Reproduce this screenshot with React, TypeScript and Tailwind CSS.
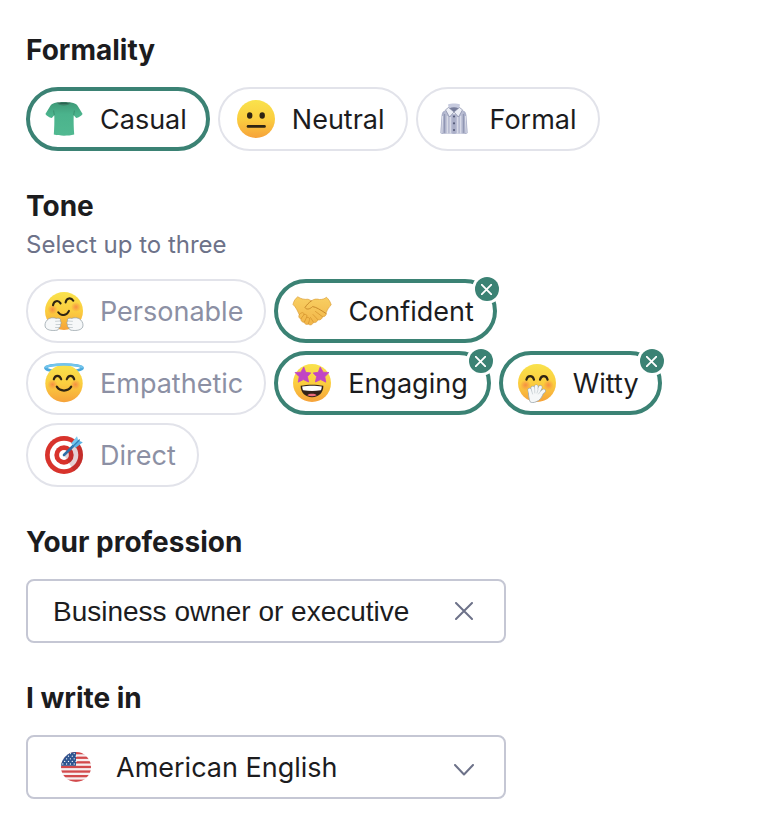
import React, { useState } from 'react';

type Option = {
  id: string;
  label: string;
  icon: React.ReactNode;
};

type ChipProps = {
  option: Option;
  type: 'radio' | 'checkbox';
  name: string;
  checked: boolean;
  muted?: boolean;
  onToggle: () => void;
};

const FaceGradient = ({ id }: { id: string }) => (
  <defs>
    <linearGradient id={id} x1="0" y1="0" x2="0" y2="1">
      <stop offset="0" stopColor="#f9e24c" />
      <stop offset="0.5" stopColor="#fbce3f" />
      <stop offset="1" stopColor="#f6a23a" />
    </linearGradient>
    <radialGradient id={`${id}-cheek`}>
      <stop offset="0" stopColor="#f58544" stopOpacity="0.85" />
      <stop offset="1" stopColor="#f58544" stopOpacity="0" />
    </radialGradient>
  </defs>
);

const TShirtIcon = () => (
  <svg viewBox="0 0 40 40" className="size-10 shrink-0" aria-hidden="true">
    <defs>
      <linearGradient id="tshirt" x1="0" y1="0" x2="0" y2="1">
        <stop offset="0" stopColor="#3f9a78" />
        <stop offset="0.35" stopColor="#4bb38c" />
        <stop offset="1" stopColor="#51b991" />
      </linearGradient>
    </defs>
    <path
      d="M12.5 3.6 C15 5.6 24.5 5.6 27 3.6 C30.5 4.4 32.4 5 33.6 6.8 L38.6 15 C37 17 35 18.4 32.2 19 L29.7 16.2 C29.5 23 29.7 29 30.2 35.6 C24 37.2 16 37.2 9.8 35.6 C10.3 29 10.5 23 10.3 16.2 L7.8 19 C5 18.4 3 17 1.4 15 L6.4 6.8 C7.6 5 9.5 4.4 12.5 3.6 Z"
      fill="url(#tshirt)"
    />
    <path d="M12.5 3.6 C15.5 2.8 24 2.8 27 3.6 C25 7.6 14.5 7.6 12.5 3.6 Z" fill="#3b7d65" />
    <path d="M14.5 4.2 C17 3.6 22.5 3.6 25 4.2 C22 5.4 17.5 5.4 14.5 4.2 Z" fill="#2a6350" />
    <path d="M10.3 16.2 L9.6 11.5 M29.7 16.2 L30.4 11.5" stroke="#36896a" strokeWidth="0.8" fill="none" />
  </svg>
);

const NeutralIcon = () => (
  <svg viewBox="0 0 40 40" className="size-10 shrink-0" aria-hidden="true">
    <FaceGradient id="neutral" />
    <circle cx="20" cy="20" r="19" fill="url(#neutral)" />
    <ellipse cx="13.7" cy="16.5" rx="2.7" ry="3.3" fill="#2e2413" />
    <ellipse cx="26.2" cy="16.5" rx="2.7" ry="3.3" fill="#2e2413" />
    <path d="M12 27.4 H28.5" stroke="#2e2413" strokeWidth="2.6" strokeLinecap="round" />
  </svg>
);

const DressShirtIcon = () => (
  <svg viewBox="0 0 40 40" className="size-10 shrink-0" aria-hidden="true">
    <path d="M11 11.5 C8.5 12.5 7.8 14 7.5 17 L6.3 34 C7.5 35.2 9.3 35.3 10.5 34.6 L12 16 Z" fill="#abb0c9" />
    <path d="M29 11.5 C31.5 12.5 32.2 14 32.5 17 L33.7 34 C32.5 35.2 30.7 35.3 29.5 34.6 L28 16 Z" fill="#abb0c9" />
    <path d="M12.5 10 L20 15 L27.5 10 L29.7 13 L29.2 34.8 H10.8 L10.3 13 Z" fill="#b9bdd3" />
    <path
      d="M13.3 17 V34.5 M16.3 18 V34.5 M23.7 18 V34.5 M26.7 17 V34.5 M8.6 17 L7.9 34 M31.4 17 L32.1 34"
      stroke="#dfe1ec"
      strokeWidth="1"
    />
    <path d="M10.7 15 V34.5 M29.3 15 V34.5" stroke="#858ba9" strokeWidth="0.9" />
    <path d="M18.3 16 H21.7 V34.8 H18.3 Z" fill="#a9aec7" />
    <path d="M14 5.5 C17 4.3 23 4.3 26 5.5 L25 10 L20 13.5 L15 10 Z" fill="#c6cade" />
    <path d="M15.5 9.2 C18 7.8 22 7.8 24.5 9.2 L20 13.5 Z" fill="#777d9b" />
    <path d="M14.5 8.5 L20 13 L15.5 18 L11.5 10.8 Z" fill="#eceef6" stroke="#777d9b" strokeWidth="0.6" />
    <path d="M25.5 8.5 L20 13 L24.5 18 L28.5 10.8 Z" fill="#eceef6" stroke="#777d9b" strokeWidth="0.6" />
    <circle cx="20" cy="17.5" r="1.1" fill="#555b79" />
    <circle cx="20" cy="24.3" r="1.1" fill="#555b79" />
    <circle cx="20" cy="31" r="1.1" fill="#555b79" />
  </svg>
);

const HugIcon = () => (
  <svg viewBox="0 0 40 40" className="size-10 shrink-0" aria-hidden="true">
    <FaceGradient id="hug" />
    <circle cx="20" cy="20" r="19" fill="url(#hug)" />
    <circle cx="8.5" cy="18.5" r="5" fill="url(#hug-cheek)" />
    <circle cx="32" cy="16" r="5" fill="url(#hug-cheek)" />
    <path d="M9 14.2 C9.8 9.6 14.2 8.6 16.6 12.4" stroke="#2e2413" strokeWidth="2.1" strokeLinecap="round" fill="none" />
    <path d="M21.6 11.4 C22.4 6.9 26.9 6 29.3 9.7" stroke="#2e2413" strokeWidth="2.1" strokeLinecap="round" fill="none" />
    <path d="M14.2 21.3 C17 25.5 23 24.5 25 19.8" stroke="#2e2413" strokeWidth="2" strokeLinecap="round" fill="none" />
    <path
      d="M3.2 29 C5 26.5 9.5 26.3 12.5 27.4 C15.5 26.8 17.3 28 16.2 30 C17.6 31 17.4 32.8 16.2 33.5 C17.2 35 16.3 36.4 15 36.5 C15.3 38.5 13.5 39.4 11.5 39.4 C7 39.8 2.6 39 1.3 36 C0.5 33.5 1.3 31 3.2 29 Z"
      fill="#f6f8f9"
      stroke="#8e9ba2"
      strokeWidth="0.7"
    />
    <path
      d="M36.8 29 C35 26.5 30.5 26.3 27.5 27.4 C24.5 26.8 22.7 28 23.8 30 C22.4 31 22.6 32.8 23.8 33.5 C22.8 35 23.7 36.4 25 36.5 C24.7 38.5 26.5 39.4 28.5 39.4 C33 39.8 37.4 39 38.7 36 C39.5 33.5 38.7 31 36.8 29 Z"
      fill="#f6f8f9"
      stroke="#8e9ba2"
      strokeWidth="0.7"
    />
    <path
      d="M16.2 30 L11.5 30.3 M16.2 33.5 L12 33.6 M15 36.5 L11.5 36.5 M23.8 30 L28.5 30.3 M23.8 33.5 L28 33.6 M25 36.5 L28.5 36.5"
      stroke="#b4bec3"
      strokeWidth="0.7"
      strokeLinecap="round"
    />
  </svg>
);

const HandshakeIcon = () => (
  <svg viewBox="0 0 40 40" className="size-10 shrink-0" aria-hidden="true">
    <defs>
      <linearGradient id="shake" x1="0" y1="0" x2="0" y2="1">
        <stop offset="0" stopColor="#f8cf62" />
        <stop offset="1" stopColor="#f2b548" />
      </linearGradient>
    </defs>
    <path
      d="M1 13.5 C1.5 10.5 3.5 7.3 5.8 5.8 C9 8 12.5 8.7 16 8.2 L19.5 9.8 C22 7.8 25 7.8 27.5 8.5 C30.3 8.6 32.5 7.8 34.5 6.3 C36.8 8.3 38.5 11 39.2 14 C36.8 16 35.5 18.5 34.3 21.5 C34.6 24.5 32.5 26 30.5 25.7 C30 28.3 28 29.3 26 28.8 C25 31.3 23 32 21.5 31.3 C20.5 34 18 34.6 16.3 33 C14.5 34 12.5 33 12.3 31.2 C10 31.5 8.5 29.6 9 27.8 C6.8 27.5 6.3 25.3 7.3 23.7 C5.5 20 4 16 1 13.5 Z"
      fill="url(#shake)"
      stroke="#dda03c"
      strokeWidth="0.7"
      strokeLinejoin="round"
    />
    <path
      d="M19.5 9.8 C17 11.5 14.5 14 13 16.6 C14.5 19 18 18.2 20.5 15.6 C24 16 28 18.5 34 22.5"
      fill="none"
      stroke="#c98a2c"
      strokeWidth="1"
      strokeLinecap="round"
      strokeLinejoin="round"
    />
    <path
      d="M23.5 20.5 L30.5 25.7 M21 23.500 L26 28.800 M18.500 26.500 L21.500 31.300 M7.300 23.700 C9 21.300 11.200 21 12 22.700 C12.500 24.300 10 25.300 9 27.800 M12 23.600 C14.300 22.800 15.600 24.300 14.700 26 L12.300 31.200 M15 26.300 C17.300 26 18.300 27.800 17.400 29.400 L16.300 33"
      fill="none"
      stroke="#d5962f"
      strokeWidth="0.8"
      strokeLinecap="round"
    />
  </svg>
);

const HaloIcon = () => (
  <svg viewBox="0 0 40 40" className="size-10 shrink-0" aria-hidden="true">
    <FaceGradient id="halo" />
    <ellipse cx="20" cy="5" rx="18.6" ry="3.5" fill="none" stroke="#4ba9dd" strokeWidth="2.6" />
    <circle cx="20" cy="20.5" r="18.7" fill="url(#halo)" />
    <path d="M2 4 C7 0.8 33 0.8 38 4" fill="none" stroke="#72c5ec" strokeWidth="2.2" strokeLinecap="round" />
    <circle cx="8.5" cy="21.5" r="5" fill="url(#halo-cheek)" />
    <circle cx="31.5" cy="21.5" r="5" fill="url(#halo-cheek)" />
    <path d="M9.8 16.3 C11 11.7 15.8 11.7 17.2 16.3" stroke="#2e2413" strokeWidth="2.2" strokeLinecap="round" fill="none" />
    <path d="M22.8 16.3 C24.2 11.7 29 11.7 30.2 16.3" stroke="#2e2413" strokeWidth="2.2" strokeLinecap="round" fill="none" />
    <path d="M12.8 23.7 C16 28.8 24 28.8 27.2 23.7" stroke="#2e2413" strokeWidth="2.2" strokeLinecap="round" fill="none" />
  </svg>
);

const StarEyesIcon = () => (
  <svg viewBox="0 0 40 40" className="size-10 shrink-0" aria-hidden="true">
    <FaceGradient id="stars" />
    <circle cx="20" cy="20" r="19" fill="url(#stars)" />
    <path
      d="M11.8 4 L13.7 9.3 L18.8 9.9 L15.4 13.6 L16.6 19 L11.3 16.6 L6.2 19.2 L7.2 13.7 L3 9.5 L8.8 9.2 Z"
      fill="#c144c4"
      stroke="#c144c4"
      strokeWidth="0.8"
      strokeLinejoin="round"
    />
    <path
      d="M28.2 4 L26.3 9.3 L21.2 9.9 L24.6 13.6 L23.4 19 L28.7 16.6 L33.8 19.2 L32.8 13.7 L37 9.5 L31.2 9.2 Z"
      fill="#c144c4"
      stroke="#c144c4"
      strokeWidth="0.8"
      strokeLinejoin="round"
    />
    <path d="M8.7 22.8 C15 21.3 25 21.3 31.3 22.8 C31.5 29.5 27 34.2 20 34.2 C13 34.2 8.5 29.5 8.7 22.8 Z" fill="#33231a" />
    <path d="M10.2 23.6 C16 22.5 24 22.5 29.8 23.6 C29.7 25.5 29.3 26.7 28.8 27.3 C23 28.2 17 28.2 11.2 27.3 C10.6 26.7 10.3 25.5 10.2 23.6 Z" fill="#fff" />
    <path d="M15.3 32.2 C17.3 30.3 22.7 30.3 24.7 32.2 C22 33.6 18 33.6 15.3 32.2 Z" fill="#ec6b7c" />
  </svg>
);

const GiggleIcon = () => (
  <svg viewBox="0 0 40 40" className="size-10 shrink-0" aria-hidden="true">
    <FaceGradient id="giggle" />
    <circle cx="20" cy="20" r="19" fill="url(#giggle)" />
    <circle cx="8.5" cy="22" r="5.2" fill="url(#giggle-cheek)" />
    <circle cx="31.5" cy="22" r="5.2" fill="url(#giggle-cheek)" />
    <path d="M9.4 16.7 C10.5 12 15.8 12 17 16.7" stroke="#2e2413" strokeWidth="2.2" strokeLinecap="round" fill="none" />
    <path d="M23 16.7 C24.2 12 29.500 12 30.600 16.700" stroke="#2e2413" strokeWidth="2.2" strokeLinecap="round" fill="none" />
    <path d="M12.600 27 L14 32 M15.700 25 L17 31 M19.300 23.500 L18.500 31 M23.400 24.300 L20 31 M26.700 28 L20 33" stroke="#9aa6ad" strokeWidth="4.2" strokeLinecap="round" />
    <path
      d="M11.500 28 C11.300 32 12 36 13 38.700 C14.500 40 17 39.700 19 38.800 C23 37.500 25 34 26.500 30 L20 28 Z"
      fill="#f5f7f8"
      stroke="#9aa6ad"
      strokeWidth="0.8"
    />
    <path d="M12.600 27 L14 32 M15.700 25 L17 31 M19.300 23.500 L18.500 31 M23.400 24.300 L20 31 M26.700 28 L20 33" stroke="#f5f7f8" strokeWidth="3.1" strokeLinecap="round" />
    <path d="M14.300 26.500 L15.600 31 M17.600 25.500 L17.800 30 M21.200 26 L20 30 M23.800 28 L21.500 31" stroke="#b9c2c7" strokeWidth="0.6" strokeLinecap="round" />
  </svg>
);

const TargetIcon = () => (
  <svg viewBox="0 0 40 40" className="size-10 shrink-0" aria-hidden="true">
    <circle cx="20" cy="20" r="19" fill="#d8332c" />
    <circle cx="20" cy="20" r="14.3" fill="#fff" />
    <circle cx="20" cy="20" r="9.7" fill="#d8332c" />
    <circle cx="20" cy="20" r="4.9" fill="#fff" />
    <path d="M20 20 L35 8.3 A19 19 0 0 1 30 36.2 Z" fill="#7a1a22" opacity="0.2" />
    <path d="M20 20 L31.5 8.8" stroke="#2d6fa8" strokeWidth="2.6" strokeLinecap="round" />
    <path d="M27 8.5 L33 1.2 L34.3 5.6 L29.5 10.7 Z" fill="#7ac8ee" />
    <path d="M31.5 13 L38.8 7.2 L34.3 5.6 L29.5 10.7 Z" fill="#5db4e4" />
    <path d="M28.5 11.7 L35.3 4.9" stroke="#3583ba" strokeWidth="1.4" strokeLinecap="round" />
  </svg>
);

const FlagIcon = () => (
  <svg viewBox="0 0 30 30" className="size-[30px] shrink-0" aria-hidden="true">
    <clipPath id="flag-clip">
      <circle cx="15" cy="15" r="15" />
    </clipPath>
    <g clipPath="url(#flag-clip)">
      <rect width="30" height="30" fill="#f7eff0" />
      {[0, 1, 2, 3, 4, 5, 6].map((i) => (
        <rect key={i} y={i * 4.6} width="30" height="2.3" fill="#d24a4c" />
      ))}
      <rect width="15" height="13.8" fill="#2f5590" />
      {[0, 1, 2, 3, 4].map((row) =>
        [0, 1, 2, 3].map((col) => (
          <circle key={`${row}-${col}`} cx={1.8 + col * 3.8 + (row % 2) * 1.9} cy={1.6 + row * 2.6} r="0.65" fill="#fff" />
        ))
      )}
    </g>
  </svg>
);

const CrossIcon = ({ className }: { className: string }) => (
  <svg viewBox="0 0 18 18" className={className} fill="none" stroke="currentColor" strokeLinecap="round" aria-hidden="true">
    <path d="M1 1 L17 17 M17 1 L1 17" />
  </svg>
);

const formalities: Option[] = [
  { id: 'casual', label: 'Casual', icon: <TShirtIcon /> },
  { id: 'neutral', label: 'Neutral', icon: <NeutralIcon /> },
  { id: 'formal', label: 'Formal', icon: <DressShirtIcon /> },
];

const tones: Option[] = [
  { id: 'personable', label: 'Personable', icon: <HugIcon /> },
  { id: 'confident', label: 'Confident', icon: <HandshakeIcon /> },
  { id: 'empathetic', label: 'Empathetic', icon: <HaloIcon /> },
  { id: 'engaging', label: 'Engaging', icon: <StarEyesIcon /> },
  { id: 'witty', label: 'Witty', icon: <GiggleIcon /> },
  { id: 'direct', label: 'Direct', icon: <TargetIcon /> },
];

const MAX_TONES = 3;

const Chip: React.FC<ChipProps> = ({ option, type, name, checked, muted, onToggle }) => (
  <div className="relative">
    <label
      className={`flex h-16 cursor-pointer items-center gap-4 rounded-full bg-white text-[27px] leading-9 ${
        checked ? 'border-4 border-[#3b8274] pr-[19px] pl-3.5' : 'border-2 border-[#e2e3ea] pr-[21px] pl-4'
      } ${muted ? 'text-[#8c90a4]' : 'text-[#1c1c1e]'}`}
    >
      <input type={type} name={name} value={option.id} checked={checked} onChange={onToggle} className="sr-only" />
      {option.icon}
      <span className="pt-0.5">{option.label}</span>
    </label>
    {type === 'checkbox' && checked && (
      <button
        type="button"
        aria-label={`Remove ${option.label}`}
        onClick={onToggle}
        className="absolute -top-0.5 -right-0.5 flex size-6 items-center justify-center rounded-full bg-[#3b8274] text-white ring-3 ring-white"
      >
        <CrossIcon className="size-[11px] stroke-3" />
      </button>
    )}
  </div>
);

const App: React.FC = () => {
  const [formality, setFormality] = useState('casual');
  const [selected, setSelected] = useState<string[]>(['confident', 'engaging', 'witty']);
  const [profession, setProfession] = useState('Business owner or executive');
  const [language, setLanguage] = useState('en-US');

  const toggleTone = (id: string) => {
    setSelected((prev) => {
      if (prev.includes(id)) return prev.filter((t) => t !== id);
      return prev.length < MAX_TONES ? [...prev, id] : prev;
    });
  };

  return (
    <form className="flex min-h-screen flex-col gap-9 bg-white px-[26px] pt-8 pb-5 font-['Inter',sans-serif] text-[#1c1c1e]">
      <fieldset>
        <legend className="mb-[19px] text-[28px] leading-9 font-bold">Formality</legend>
        <div className="flex flex-wrap gap-2">
          {formalities.map((option) => (
            <Chip
              key={option.id}
              option={option}
              type="radio"
              name="formality"
              checked={formality === option.id}
              onToggle={() => setFormality(option.id)}
            />
          ))}
        </div>
      </fieldset>

      <fieldset>
        <legend className="pt-px text-[28px] leading-9 font-bold">Tone</legend>
        <p className="mt-[5px] mb-[18px] text-2xl text-[#6d7289]">Select up to three</p>
        <div className="flex flex-wrap gap-2">
          {tones.map((option) => (
            <Chip
              key={option.id}
              option={option}
              type="checkbox"
              name="tone"
              checked={selected.includes(option.id)}
              muted={selected.length >= MAX_TONES && !selected.includes(option.id)}
              onToggle={() => toggleTone(option.id)}
            />
          ))}
        </div>
      </fieldset>

      <div className="flex flex-col gap-[19px]">
        <label htmlFor="profession" className="pt-px text-[28px] leading-9 font-bold">
          Your profession
        </label>
        <div className="flex h-16 w-full max-w-[480px] items-center rounded-lg border-2 border-[#c5c7d4] pr-[31px] pl-[25px]">
          <input
            id="profession"
            type="text"
            value={profession}
            onChange={(e) => setProfession(e.target.value)}
            className="min-w-0 flex-1 pt-0.5 font-['Liberation_Sans',sans-serif] text-[28px] leading-9 outline-none"
          />
          <button type="button" aria-label="Clear profession" onClick={() => setProfession('')} className="text-[#6d7289]">
            <CrossIcon className="size-[18px] stroke-2" />
          </button>
        </div>
      </div>

      <div className="flex flex-col gap-[19px]">
        <label htmlFor="language" className="pt-px text-[28px] leading-9 font-bold">
          I write in
        </label>
        <div className="flex h-16 w-full max-w-[480px] items-center rounded-lg border-2 border-[#c5c7d4] pr-[30px] pl-[33px]">
          <FlagIcon />
          <select
            id="language"
            value={language}
            onChange={(e) => setLanguage(e.target.value)}
            className="ml-[25px] min-w-0 flex-1 appearance-none bg-transparent pt-0.5 text-[27px] leading-9 outline-none"
          >
            <option value="en-US">American English</option>
            <option value="en-GB">British English</option>
            <option value="en-CA">Canadian English</option>
            <option value="en-AU">Australian English</option>
          </select>
          <svg viewBox="0 0 20 12" className="mt-1.5 h-3 w-5 text-[#6d7289]" fill="none" stroke="currentColor" strokeWidth="2" aria-hidden="true">
            <path d="M1 1 L10 10.5 L19 1" strokeLinecap="round" strokeLinejoin="round" />
          </svg>
        </div>
      </div>
    </form>
  );
};

export default App;
